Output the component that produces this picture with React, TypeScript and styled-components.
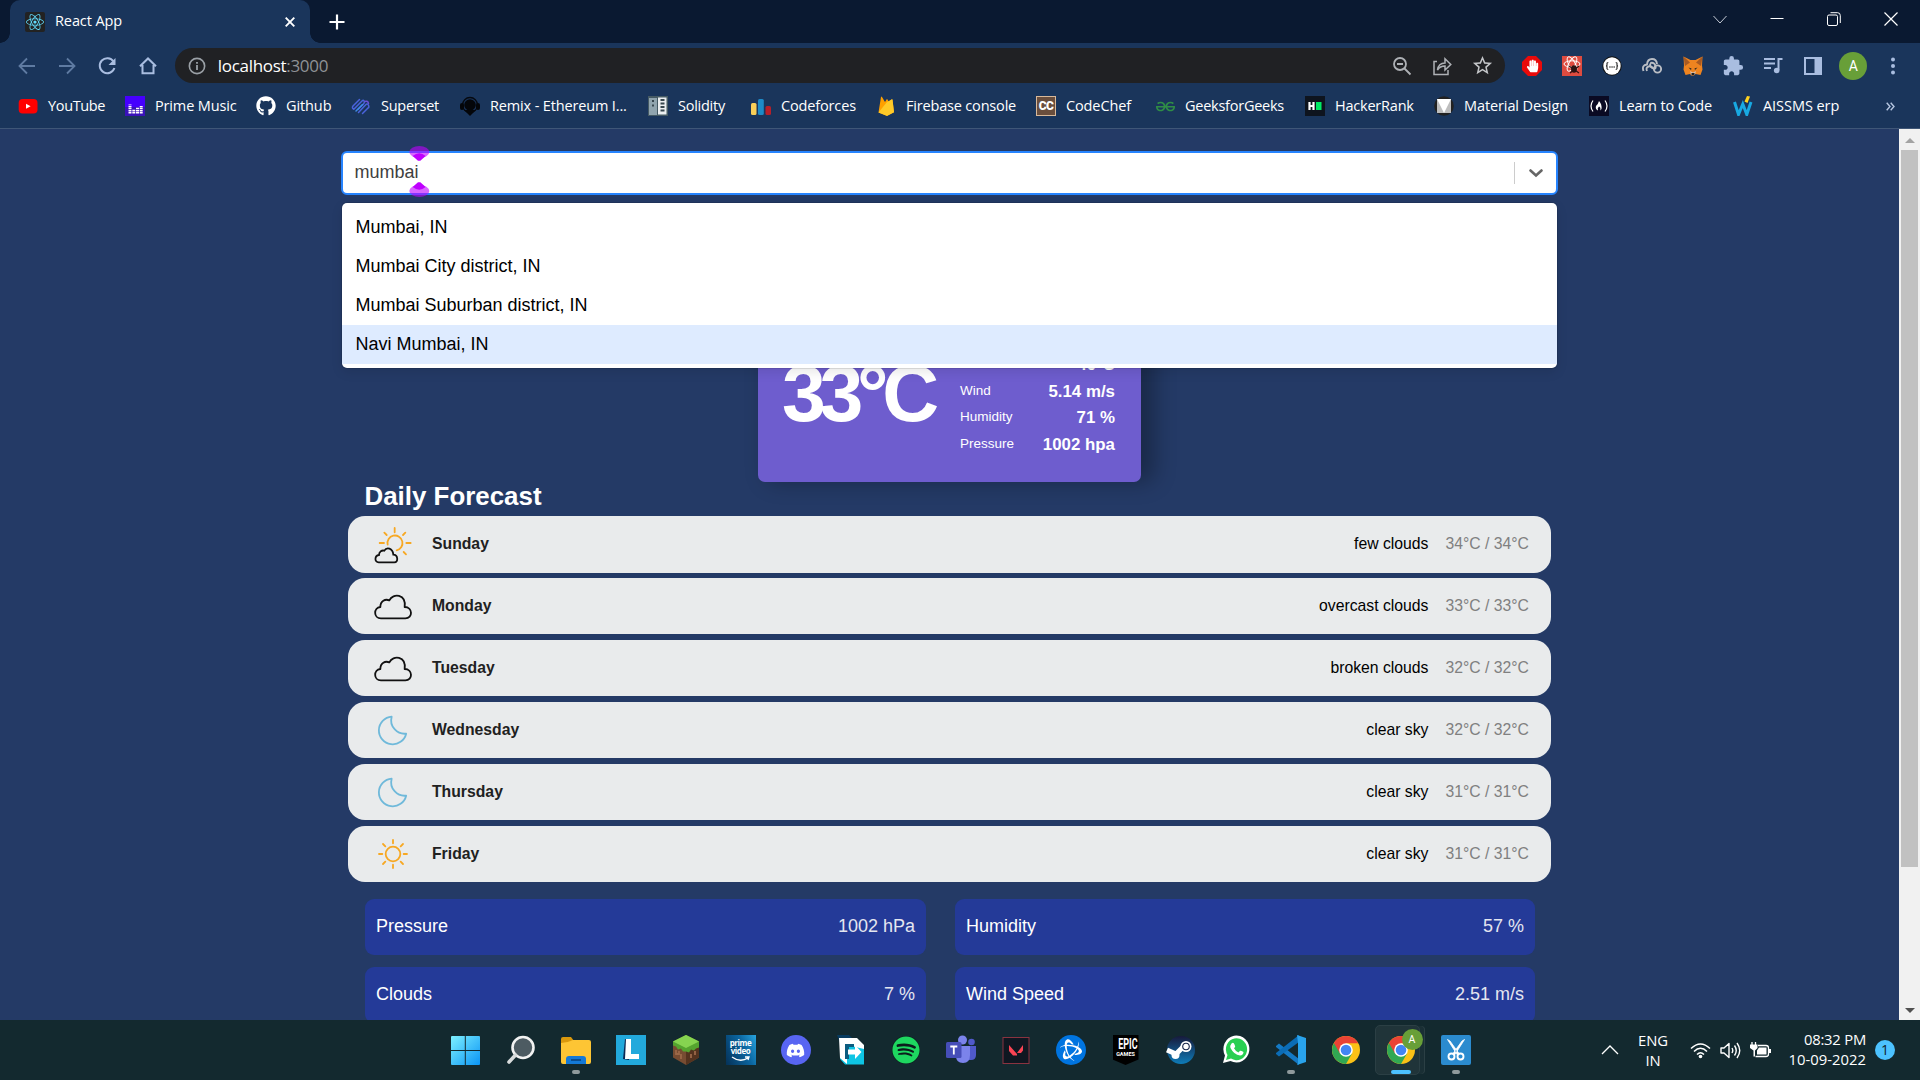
import React from "react";
import styled, { createGlobalStyle } from "styled-components";
import { FaGithub, FaDiscord, FaSpotify, FaReact, FaHandPaper } from "react-icons/fa";
import { SiBattledotnet, SiGeeksforgeeks } from "react-icons/si";
import { MdExtension, MdOutlineStarBorder } from "react-icons/md";

const ui = `"Open Sans", "Noto Sans", sans-serif`;
const arial = `"Liberation Sans", Arial, sans-serif`;

const GlobalStyle = createGlobalStyle`
  * { box-sizing: border-box; }
  body { margin: 0; overflow: hidden; background: #243a66; }
  svg { display: block; flex: none; }
`;

const Screen = styled.div`
  width: 1920px;
  height: 1080px;
  display: flex;
  flex-direction: column;
  overflow: hidden;
  font-family: ${ui};
`;

/* ---------- browser chrome ---------- */

const TabStrip = styled.header`
  height: 43px;
  flex: none;
  display: flex;
  background: #0a1931;
  padding-left: 10px;
  color: #fff;
`;

const Tab = styled.div`
  width: 300px;
  display: flex;
  align-items: center;
  padding: 0 15px;
  background: #1a355b;
  border-radius: 10px 10px 0 0;
  font-size: 14.5px;
  letter-spacing: -0.1px;
  position: relative;
  &::before, &::after {
    content: "";
    position: absolute;
    bottom: 0;
    width: 10px;
    height: 10px;
  }
  &::before { left: -10px; background: radial-gradient(circle at 0 0, transparent 9.5px, #1a355b 10px); }
  &::after { right: -10px; background: radial-gradient(circle at 100% 0, transparent 9.5px, #1a355b 10px); }
`;

const TabIcon = styled.span`
  width: 20px;
  height: 20px;
  margin-right: 10px;
  border-radius: 2px;
  background: #222;
  display: grid;
  place-items: center;
  color: #61dafb;
`;

const TabTitle = styled.span`
  flex: 1;
  padding-bottom: 2px;
`;

const NewTab = styled.div`
  width: 54px;
  display: grid;
  place-items: center;
`;

const WindowButtons = styled.div`
  margin-left: auto;
  display: flex;
  padding-right: 1px;
  height: 37px;
`;

const WindowButton = styled.div`
  width: 57px;
  display: grid;
  place-items: center;
`;

const Toolbar = styled.div`
  height: 46px;
  flex: none;
  display: flex;
  align-items: center;
  background: #1a355b;
  padding: 0 0 1px 7px;
`;

const ToolButton = styled.div<{ $dim?: boolean }>`
  width: 40.2px;
  height: 36px;
  display: grid;
  place-items: center;
  color: ${(p) => (p.$dim ? "#5f7ba2" : "#a9bde0")};
`;

const Omnibox = styled.div`
  width: 1330px;
  height: 35px;
  margin-left: 7px;
  margin-right: 7px;
  border-radius: 18px;
  background: #202124;
  display: flex;
  align-items: center;
  padding-left: 13px;
  padding-right: 2px;
  color: #9aa0a6;
`;

const Url = styled.div`
  flex: 1;
  margin-left: 12px;
  font-size: 17px;
  letter-spacing: -0.3px;
  padding-bottom: 1px;
  color: #8f9296;
  b { color: #fff; font-weight: 400; }
`;

const Avatar = styled.div<{ $size: number }>`
  width: ${(p) => p.$size}px;
  height: ${(p) => p.$size}px;
  border-radius: 50%;
  background: #689f38;
  color: #fff;
  font: ${(p) => p.$size / 2}px Roboto, sans-serif;
  display: grid;
  place-items: center;
`;

const Bookmarks = styled.nav`
  height: 40px;
  flex: none;
  display: flex;
  align-items: center;
  background: #1a355b;
  border-bottom: 1px solid #3f5677;
  padding: 0 0 5px 18px;
  color: #fff;
`;

const Bookmark = styled.div<{ $w: number; $track: number }>`
  width: ${(p) => p.$w}px;
  flex: none;
  display: flex;
  align-items: center;
  gap: 10px;
  white-space: nowrap;
  font-size: 14.5px;
  letter-spacing: ${(p) => p.$track}px;
  line-height: 20px;
`;

/* ---------- page ---------- */

const Viewport = styled.div`
  height: 891px;
  flex: none;
  display: flex;
  overflow: hidden;
  background: #243a66;
`;

const Page = styled.main`
  flex: 1;
  padding-top: 22px;
  font-family: ${arial};
`;

const Container = styled.div`
  width: 1217px;
  margin: 0 auto;
  position: relative;
  display: flex;
  flex-direction: column;
`;

const Control = styled.div`
  height: 44px;
  border: 2px solid #2684ff;
  border-radius: 6px;
  background: #fff;
  display: flex;
  align-items: center;
  padding-left: 11.5px;
  font-size: 18px;
  color: #404040;
`;

const Query = styled.span`
  flex: 1;
  padding-bottom: 2px;
`;

const Separator = styled.span`
  width: 1px;
  height: 22px;
  background: #ccc;
`;

const Dropdown = styled.span`
  width: 41px;
  display: grid;
  place-items: center;
`;

const Menu = styled.div`
  position: absolute;
  z-index: 2;
  top: 52px;
  left: 1px;
  right: 1px;
  padding: 5px 0 4px;
  border-radius: 5px;
  background: #fff;
  box-shadow: 0 0 0 1px rgba(0, 0, 0, 0.1), 0 4px 12px rgba(0, 0, 0, 0.1);
`;

const Option = styled.div<{ $active?: boolean }>`
  height: 39px;
  line-height: 38px;
  padding: 0 13.5px;
  font-size: 18px;
  color: #000;
  background: ${(p) => (p.$active ? "#deebff" : "transparent")};
`;

const Caret = styled.svg`
  position: absolute;
  z-index: 3;
  left: 66px;
  top: -6px;
`;

const WeatherCard = styled.section`
  width: 383px;
  height: 259px;
  margin: 28px auto 0;
  padding: 0 26px 22px;
  border-radius: 7px;
  background: #6e5dce;
  box-shadow: 11px -2px 22px 2px rgba(0, 0, 0, 0.3);
  color: #fff;
  display: flex;
  align-items: flex-end;
  justify-content: space-between;
`;

const Temperature = styled.div`
  margin-bottom: 27px;
  font-weight: 700;
  font-size: 78.75px;
  line-height: 78px;
  letter-spacing: -6.3px;
  margin-left: -2px;
`;

const Details = styled.div`
  width: 155px;
`;

const DetailRow = styled.div`
  height: 26.8px;
  display: flex;
  justify-content: space-between;
`;

const DetailLabel = styled.span`
  font-size: 13.5px;
  line-height: 21px;
`;

const DetailValue = styled.span`
  font-size: 16.875px;
  font-weight: 700;
  line-height: 24px;
`;

const Heading = styled.h2`
  margin: 0 0 0 23.5px;
  height: 34px;
  line-height: 29px;
  font-size: 25.9px;
  color: #fff;
`;

const DayList = styled.div`
  display: flex;
  flex-direction: column;
  gap: 6px;
  padding: 0 7px;
`;

const DayRow = styled.div<{ $first: boolean }>`
  height: ${(p) => (p.$first ? 57 : 56)}px;
  margin-bottom: ${(p) => (p.$first ? -1 : 0)}px;
  display: flex;
  align-items: center;
  padding: 0 22px 1px;
  border-radius: 17px;
  background: #e9ebec;
  font-size: 15.75px;
`;

const DayIcon = styled.span`
  margin-right: 14px;
`;

const DayName = styled.span`
  flex: 1;
  font-weight: 700;
  color: #212121;
`;

const DayText = styled.span`
  margin-right: 17px;
  color: #000;
`;

const DayTemps = styled.span`
  color: #808080;
`;

const Facts = styled.div`
  display: grid;
  grid-template-columns: 561px 580px;
  column-gap: 29px;
  row-gap: 11.5px;
  padding: 17px 0 0 24px;
`;

const Fact = styled.div`
  height: 56px;
  display: flex;
  justify-content: space-between;
  padding: 17px 11px 0;
  border-radius: 9px;
  background: #243a98;
  color: #fff;
  font-size: 18px;
  line-height: 20px;
  span { color: #e4e6f0; }
`;

const ScrollTrack = styled.div`
  width: 21px;
  background: #f1f1f1;
  display: flex;
  flex-direction: column;
  align-items: center;
`;

const ScrollArrow = styled.div`
  height: 21px;
  display: grid;
  place-items: center;
`;

const ScrollThumb = styled.div`
  width: 17px;
  height: 717px;
  margin-bottom: auto;
  background: #c1c1c1;
`;

/* ---------- taskbar ---------- */

const Taskbar = styled.footer`
  height: 60px;
  flex: none;
  display: flex;
  background: #13292f;
  padding-left: 438px;
  color: #fff;
`;

const TaskItem = styled.div`
  width: 55px;
  height: 60px;
  padding-top: 15px;
  display: flex;
  flex-direction: column;
  align-items: center;
  position: relative;
`;

const ActivePlate = styled.div`
  position: absolute;
  left: 2px;
  top: 5px;
  width: 45px;
  height: 50px;
  border-radius: 5px;
  background: #203439;
  border: 1px solid #2b3f44;
  box-shadow: 5px 0 0 -1px #1a2f35, 6px 0 0 -1px #2b3f44;
`;

const TaskIcon = styled.div`
  position: relative;
  width: 30px;
  height: 30px;
`;

const Badge = styled.div`
  position: absolute;
  left: 16px;
  top: -6px;
`;

const Indicator = styled.div<{ $active?: boolean }>`
  position: relative;
  margin-top: 5px;
  width: ${(p) => (p.$active ? 20 : 8)}px;
  height: 4px;
  border-radius: 2px;
  background: ${(p) => (p.$active ? "#4cc2ff" : "#8f9a9c")};
`;

const Round = styled.div<{ $bg: string; $fg: string; $size?: number }>`
  width: ${(p) => p.$size || 28}px;
  height: ${(p) => p.$size || 28}px;
  margin: ${(p) => (30 - (p.$size || 28)) / 2}px;
  border-radius: 50%;
  background: ${(p) => p.$bg};
  color: ${(p) => p.$fg};
  display: grid;
  place-items: center;
`;

const Tray = styled.div`
  margin-left: auto;
  display: flex;
  align-items: center;
  padding-right: 25px;
  font-size: 14.8px;
  line-height: 20px;
`;

const Language = styled.div`
  width: 40px;
  margin: 0 17px 0 14px;
  text-align: center;
  letter-spacing: -0.1px;
  padding-bottom: 1px;
`;

const Status = styled.div`
  display: flex;
  gap: 9px;
`;

const Clock = styled.div`
  width: 95px;
  text-align: right;
  padding-bottom: 3px;
  white-space: nowrap;
`;

const ClockTime = styled.div`
  letter-spacing: -0.22px;
`;

const ClockDate = styled.div`
  letter-spacing: 0.02px;
`;

const Notice = styled.div`
  width: 20px;
  height: 20px;
  margin-left: 9px;
  border-radius: 50%;
  background: #4cc2ff;
  color: #10242c;
  font-size: 14px;
  text-align: center;
`;

/* ---------- drawings ---------- */

type IconProps = { children: React.ReactNode; size?: number; box?: string };
const Svg = ({ children, size = 20, box = "0 0 20 20" }: IconProps) => (
  <svg width={size} height={size} viewBox={box} fill="none">{children}</svg>
);

const YouTube = () => (<Svg><rect x=".7" y="3" width="18.800" height="14.500" rx="4" fill="#f00" /><path d="M8 7.700v5.100l4.600-2.600z" fill="#fff" /></Svg>);
const PrimeMusic = () => (
  <Svg>
    <rect width="20" height="20" fill="#4600ff" /><rect y="11" width="20" height="9" fill="#3a12ba" />
    <path d="M5 17.500v-9M8.800 17.500V13M12.500 17.500V11.500M16.200 17.500V10" stroke="#fff" strokeWidth="3" strokeDasharray="1.5 .6" />
  </Svg>
);
const Superset = () => (
  <Svg>
    <g stroke="#4a63dc" strokeWidth="1.500" strokeLinecap="round" strokeLinejoin="round">
      <path d="M8.500 3.500L2 10q-1.500 2 .8 3.300L11 5q1.500-1.500 2.200.2T12 8.500l-5 5" />
      <path d="M5 15l6.500-6.500" stroke="#3f8be8" />
      <path d="M7.500 16.500l7-7.500q2-2 3 .2T17 12l-5.500 5.500" />
      <path d="M14 5.500q3-1 3.500 2" stroke="#6c4fd6" />
    </g>
  </Svg>
);
const Remix = () => (
  <Svg><circle cx="10" cy="9" r="7.500" stroke="#06090f" strokeWidth="1.300" /><circle cx="10" cy="9" r="5.800" fill="#04060a" /><path d="M4 14h12l-6 6z" fill="#04060a" /><rect x="0" y="7" width="4" height="7" rx="2" fill="#04060a" /><rect x="16" y="7" width="4" height="7" rx="2" fill="#04060a" /></Svg>
);
const Solidity = () => (
  <Svg><rect width="20" height="20" fill="#455a64" /><rect x="1" y="2" width="8" height="17" fill="#90a4ae" /><rect x="10" y="1.500" width="8.500" height="17" fill="#eceff1" /><path d="M5 4v2M5 8.500v2M12.500 4h4M12.500 7.500h4M12.500 11h4M12.500 14.500h4" stroke="#37474f" strokeWidth="2" /></Svg>
);
const Codeforces = () => (
  <Svg><rect x="0" y="7" width="5.500" height="12" rx="1.500" fill="#f9cf58" /><rect x="7" y="3" width="5.800" height="16" rx="1.500" fill="#1d8ac7" /><rect x="14.500" y="10" width="5.500" height="9" rx="1.500" fill="#b71f29" /></Svg>
);
const Firebase = () => (
  <Svg><path d="M2.500 16.500L5 1q.4-1 1 0l3 5 1.500-2.500q.5-.8 1 0L13 6l2.500-2.500q.8-.6 1 .3l1.500 12.500-7 3.500z" fill="#ffa000" /><path d="M2.500 16.500L11 6l4.500-2.500q.8-.6 1 .3l1.500 12.500-7 3.700z" fill="#ffca28" /></Svg>
);
const Chip = styled.span<{ $bg: string; $line?: string }>`
  width: 20px;
  height: 20px;
  flex: none;
  display: grid;
  place-items: center;
  background: ${(p) => p.$bg};
  color: #fff;
  box-shadow: inset 0 0 0 1px ${(p) => p.$line || p.$bg};
  font: 900 12px/1 Roboto, sans-serif;
  letter-spacing: -0.5px;
`;
const HackerRank = () => (
  <Svg><rect width="20" height="20" fill="#0e141e" /><path d="M4.500 6v8M8.500 6v8M4.500 10h4" stroke="#fff" strokeWidth="2.200" /><rect x="11" y="6" width="5.500" height="8" fill="#00ea64" /></Svg>
);
const Material = () => (
  <Svg><circle cx="10" cy="10" r="9.800" fill="#212121" /><path d="M3 3h14v14H3z" fill="#bdbdbd" /><path d="M3 3h14l-7 14z" fill="#fff" /></Svg>
);
const FreeCode = () => (
  <Svg><rect width="20" height="20" fill="#0a0a23" /><path d="M4 4.500q-4 5.500 0 11M16 4.500q4 5.500 0 11" stroke="#fff" strokeWidth="1.200" /><path d="M10 5q3 3 2.500 8l-1.300 1.500Q12 11 10 10.500 8 12 9 14.500q-3-1.500-2-4.500 2-1.500 3-5z" fill="#fff" /></Svg>
);
const Aissms = () => (
  <Svg><path d="M1.500 6l4 12.500L9.800 8l4 10.500L18 6" stroke="#18a9e2" strokeWidth="3" /><path d="M11.500 5.500L14 0l3 .5L14.500 7z" fill="#ffd21f" /></Svg>
);

const SunCloud = () => (
  <svg width="48" height="56" viewBox="120 138 144 168" fill="none" strokeLinecap="round" strokeWidth="5.400">
    <path d="M173 224A22.500 22.500 0 1 1 200 241" stroke="#f7a823" />
    <path d="M194 174v13M163 188l7 7M226 188l-7 7M149 219h13M229 219h13M221 246l7 7" stroke="#f7a823" />
    <path d="M146 277C133 277 133 257 147 255 147 244 156 240 163 242 170 230 188 234 190 254 204 254 206 277 193 277Z" stroke="#111" />
  </svg>
);
const Cloud = () => (
  <svg width="48" height="56" viewBox="120 0 144 168" fill="none" strokeLinejoin="round" strokeWidth="5.400">
    <path d="M153 121C130 121 130 89 151 87 151 68 166 62 178 67 189 44 229 48 224 87 249 87 249 121 226 121Z" stroke="#111" />
  </svg>
);
const Moon = () => (
  <svg width="48" height="56" viewBox="120 0 144 168" fill="none" strokeLinejoin="round" strokeWidth="5.400">
    <path d="M185 44A41.500 41.500 0 1 0 228.500 95C202 98 177 73 185 44Z" stroke="#6fb9da" />
  </svg>
);
const Sun = () => (
  <svg width="48" height="56" viewBox="120 0 144 168" fill="none" strokeLinecap="round" strokeWidth="5.400" stroke="#f7a823">
    <circle cx="189" cy="84" r="22" />
    <path d="M189 42v10M189 116v10M147 84h10M221 84h10M159 54l7 7M212 107l7 7M219 54l-7 7M166 107l-7 7" />
  </svg>
);

const T = ({ children }: { children: React.ReactNode }) => <Svg size={30} box="0 0 30 30">{children}</Svg>;
const WindowsLogo = () => (
  <T><defs><linearGradient id="win" x1="0" y1="0" x2="1" y2="1"><stop stopColor="#7df0ff" /><stop offset="1" stopColor="#0a94f5" /></linearGradient></defs><path d="M0 2q0-1 1-1h12.800v14H0zM14.800 1H28q1 0 1 1v13H14.800zM0 16h13.800v14H1q-1 0-1-1zM14.800 16H29v13q0 1-1 1H14.800z" fill="url(#win)" /></T>
);
const SearchLogo = () => (<T><circle cx="17" cy="12.500" r="10.500" fill="#4d5b62" stroke="#f2f2f2" strokeWidth="2.600" /><path d="M9.500 20L3 27" stroke="#d8dbdc" strokeWidth="3.600" strokeLinecap="round" /></T>);
const Explorer = () => (
  <T><path d="M0 4q0-2 2-2h8l3 4h-4v4H0z" fill="#d9980d" /><path d="M0 8q6 0 12-3h16q2 0 2 2v20q0 2-2 2H2q-2 0-2-2z" fill="#fdc534" /><path d="M5 29v-5q0-3 3-3h14q3 0 3 3v5z" fill="#1479d6" /><path d="M10 25h10" stroke="#063f7a" strokeWidth="1.500" /></T>
);
const LApp = () => (<T><path d="M0 0h30v30H0z" fill="#22a9dc" /><path d="M9 4l-2 20 6 1V5z" fill="#0d2853" /><path d="M10 4h5v15h8v5H9z" fill="#fff" /></T>);
const Minecraft = () => (
  <T><path d="M15 0l13 6.500v16L15 30 2 22.500v-16z" fill="#774c32" /><path d="M15 13l13-6.500v16L15 30z" fill="#54331f" /><path d="M15 0l13 6.500v6l-3 1-2 2-3-1-2 3-3-1-3 0-2-3-3 1-2-3-3-1v-4z" fill="#55a42f" /><path d="M15 0l13 6.500L15 13 2 6.500z" fill="#86d450" /><path d="M5 15v4h3v-3M10 19v5M20 19v4M24 16v4" stroke="#9b6848" strokeWidth="1.800" /></T>
);
const PrimeBox = styled.div`
  width: 30px;
  height: 30px;
  padding-top: 4px;
  background: linear-gradient(65deg, #053157, #0b66a1 60%, #27a4df);
  color: #fff;
  font: 700 8px/8px "Open Sans", sans-serif;
  text-align: center;
  letter-spacing: -0.4px;
  svg { margin: 1px auto 0; }
`;
const Prime = () => (<PrimeBox>prime<br />video<svg width="20" height="7" viewBox="0 0 20 7" fill="none"><path d="M1 1q8 6 16 1M14 1l4 0-1 3" stroke="#fff" strokeWidth="1.300" /></svg></PrimeBox>);
const ArrowApp = () => (
  <T><path d="M1 0h12l4 4v18H9z" fill="#083b60" /><path d="M9 29.500L4 24V3h16l8 8v18.500z" fill="#0ec5e4" /><path d="M3 3h18l7 7v4l-17-4v19L4 23z" fill="#fff" /><path d="M9 9h9v3h-5v12H9z" fill="#0b5c80" /><path d="M12 14.500h7v-4.500l6.500 7-6.500 7v-4.500h-7z" fill="#fff" /></T>
);
const Teams = () => (
  <T><circle cx="16.500" cy="5" r="4.500" fill="#7b83eb" /><circle cx="25.500" cy="7" r="3.300" fill="#5059c9" /><path d="M21 11h9v9q0 5-5 5h-4z" fill="#5059c9" /><path d="M10 11h14v9q0 8-7 8t-7-7z" fill="#7b83eb" /><rect x="0" y="7" width="15.500" height="16" rx="1.500" fill="#464eb8" /><path d="M4.300 11.500h7M7.800 11.500v8" stroke="#fff" strokeWidth="1.800" /></T>
);
const Valorant = () => (<T><rect x="2" y="2.500" width="26" height="26" fill="#0f1721" stroke="#8a3340" /><path d="M8 10l8 9v1.500h-4L8 16zM22 10v5.500l-2 2.500h-4z" fill="#fa4454" /></T>);
const EpicBox = styled.div`
  width: 26px;
  height: 30px;
  margin: 0 2px;
  padding-top: 3px;
  background: #000;
  clip-path: polygon(0 0, 100% 0, 100% 82%, 50% 100%, 0 82%);
  color: #fff;
  text-align: center;
  font: 700 15px/13px Roboto, sans-serif;
  span { display: block; transform: scaleX(0.6); letter-spacing: 0; }
  small { display: block; font: 700 5.500px/7px Roboto, sans-serif; }
`;
const Epic = () => (<EpicBox><span>EPIC</span><small>GAMES</small></EpicBox>);
const Steam = () => (
  <T><defs><linearGradient id="stm" x1="0" y1="0" x2="0" y2="1"><stop stopColor="#171a3c" /><stop offset="1" stopColor="#0e7cb8" /></linearGradient></defs><circle cx="15" cy="15" r="14" fill="url(#stm)" /><path d="M1 15l9 4 7-7" stroke="#fff" strokeWidth="5" /><circle cx="9.500" cy="20" r="4" fill="#fff" /><circle cx="20" cy="11.500" r="5.500" fill="#fff" /><circle cx="20" cy="11.500" r="3.800" fill="#152348" /><circle cx="20" cy="11.500" r="2.700" fill="#fff" /></T>
);
const WhatsApp = () => (<T><path d="M2 28l2-7.500A13 13.500 0 1 1 9.500 26z" fill="#fff" /><path d="M5 25l1.500-5A10.600 11 0 1 1 10 23.600z" fill="#29cf51" /><path d="M10.500 8.500q2-2 3 1l.7 2q0 .8-1.200 1.800 1.500 3 4.500 4.200l1.500-1.700q.7-.5 3.500 1.300-.2 3.400-3.500 3.400-6-.6-9.500-7.500-.6-2.700 1-4.500z" fill="#fff" /></T>);
const VsCode = () => (<T><path d="M0 11l3-2.500L23 24v6L0 12z" fill="#1479c4" /><path d="M0 19l3 2.500L23 7V0L0 18z" fill="#0b6cb5" /><path d="M21 0l9 3v24l-9 3 1-2V8z" fill="#29a3ec" /></T>);
const Chrome = () => (
  <T><circle cx="15" cy="15" r="14" fill="#fbc116" /><path d="M15 15L2.900 8A14 14 0 0 0 15 29l6-10.500z" fill="#31a853" /><path d="M2.900 8A14 14 0 0 1 27.200 8.200H15l-6 10.300z" fill="#ea4335" /><circle cx="15" cy="15" r="6.800" fill="#fff" /><circle cx="15" cy="15" r="5.300" fill="#4285f4" /></T>
);
const Snip = () => (
  <T><rect width="30" height="30" rx="2" fill="#2b8bcf" /><path d="M6.500 4.500L9 6l9 12.500-2 1zM23.500 4.500L21 6l-9 12.500 2 1z" fill="#fff" stroke="#fff" strokeWidth=".8" /><circle cx="10.500" cy="21.500" r="3" stroke="#fff" strokeWidth="1.900" /><circle cx="19.500" cy="21.500" r="3" stroke="#fff" strokeWidth="1.900" /></T>
);

/* ---------- data ---------- */

const bookmarks: [string, number, number, React.ReactNode][] = [
  ["YouTube", 107, -0.35, <YouTube />],
  ["Prime Music", 131, -0.15, <PrimeMusic />],
  ["Github", 95, -0.1, <FaGithub size={20} />],
  ["Superset", 109, -0.25, <Superset />],
  ["Remix - Ethereum I...", 188, -0.15, <Remix />],
  ["Solidity", 103, -0.25, <Solidity />],
  ["Codeforces", 125, -0.15, <Codeforces />],
  ["Firebase console", 160, -0.18, <Firebase />],
  ["CodeChef", 120, -0.12, <Chip $bg="#6a4e3d" $line="#d9b99a">CC</Chip>],
  ["GeeksforGeeks", 149, -0.25, <SiGeeksforgeeks size={19} color="#2f8d46" />],
  ["HackerRank", 129, -0.22, <HackerRank />],
  ["Material Design", 155, -0.1, <Material />],
  ["Learn to Code", 144, -0.15, <FreeCode />],
  ["AISSMS erp", 153, -0.05, <Aissms />],
];

const days: [string, React.ReactNode, string, string][] = [
  ["Sunday", <SunCloud />, "few clouds", "34°C / 34°C"],
  ["Monday", <Cloud />, "overcast clouds", "33°C / 33°C"],
  ["Tuesday", <Cloud />, "broken clouds", "32°C / 32°C"],
  ["Wednesday", <Moon />, "clear sky", "32°C / 32°C"],
  ["Thursday", <Moon />, "clear sky", "31°C / 31°C"],
  ["Friday", <Sun />, "clear sky", "31°C / 31°C"],
];

const details: [string, string][] = [
  ["", "40°C"],
  ["Wind", "5.14 m/s"],
  ["Humidity", "71 %"],
  ["Pressure", "1002 hpa"],
];

const facts: [string, string][] = [
  ["Pressure", "1002 hPa"],
  ["Humidity", "57 %"],
  ["Clouds", "7 %"],
  ["Wind Speed", "2.51 m/s"],
];

const tasks: { icon: React.ReactNode; open?: boolean; active?: boolean }[] = [
  { icon: <WindowsLogo /> },
  { icon: <SearchLogo /> },
  { icon: <Explorer />, open: true },
  { icon: <LApp /> },
  { icon: <Minecraft /> },
  { icon: <Prime /> },
  { icon: <Round $bg="#5865f2" $fg="#fff" $size={30}><FaDiscord size={19} /></Round> },
  { icon: <ArrowApp /> },
  { icon: <Round $bg="#0c1c1c" $fg="#1ed760"><FaSpotify size={28} /></Round> },
  { icon: <Teams /> },
  { icon: <Valorant /> },
  { icon: <Round $bg="#0074e0" $fg="#fff" $size={30}><SiBattledotnet size={22} /></Round> },
  { icon: <Epic /> },
  { icon: <Steam /> },
  { icon: <WhatsApp /> },
  { icon: <VsCode />, open: true },
  { icon: <Chrome /> },
  { icon: <Chrome />, active: true },
  { icon: <Snip />, open: true },
];

export default function App() {
  return (
    <Screen>
      <GlobalStyle />
      <TabStrip>
        <Tab>
          <TabIcon><FaReact size={18} /></TabIcon>
          <TabTitle>React App</TabTitle>
          <Svg size={10} box="0 0 10 10"><path d="M.7.7l8.600 8.600M9.300.7L.7 9.300" stroke="#fff" strokeWidth="1.900" /></Svg>
        </Tab>
        <NewTab><Svg size={16} box="0 0 16 16"><path d="M8 .5v15M.5 8h15" stroke="#fff" strokeWidth="2.200" /></Svg></NewTab>
        <WindowButtons>
          <WindowButton><Svg size={14} box="0 0 14 14"><path d="M.5 4L7 11l6.500-7" stroke="#c5cbd5" /></Svg></WindowButton>
          <WindowButton><Svg size={14} box="0 0 14 14"><path d="M.5 6.500h13" stroke="#fff" /></Svg></WindowButton>
          <WindowButton><Svg size={14} box="0 0 14 14"><rect x=".5" y="3" width="10" height="10.500" rx="1.500" stroke="#fff" /><path d="M3.500.7h7q2.800 0 2.800 2.800v7.500" stroke="#fff" /></Svg></WindowButton>
          <WindowButton><Svg size={14} box="0 0 14 14"><path d="M.5.5l13 13M13.500.5l-13 13" stroke="#fff" strokeWidth="1.200" /></Svg></WindowButton>
        </WindowButtons>
      </TabStrip>

      <Toolbar>
        <ToolButton $dim><Svg><path d="M18 10H3M10 2.500L2.500 10l7.500 7.500" stroke="currentColor" strokeWidth="1.800" /></Svg></ToolButton>
        <ToolButton $dim><Svg><path d="M2 10h15M10 2.500l7.500 7.500-7.500 7.500" stroke="currentColor" strokeWidth="1.800" /></Svg></ToolButton>
        <ToolButton><Svg><path d="M16.500 5.500A7.500 7.500 0 1 0 17.400 12" stroke="currentColor" strokeWidth="2" /><path d="M18.500 2v7h-7z" fill="currentColor" /></Svg></ToolButton>
        <ToolButton><Svg><path d="M4.500 9v8.200h11V9M2 10.300L10 2.500l8 7.800" stroke="currentColor" strokeWidth="2" /></Svg></ToolButton>
        <Omnibox>
          <Svg size={18}><circle cx="10" cy="10" r="8.500" stroke="currentColor" strokeWidth="1.800" /><path d="M10 9v5.500M10 5.500v2" stroke="currentColor" strokeWidth="2" /></Svg>
          <Url><b>localhost</b>:3000</Url>
          <ToolButton><Svg><g stroke="#aeb1b5" strokeWidth="1.800"><circle cx="8" cy="8" r="6" /><path d="M12.500 12.500l6 6M5 8h6" /></g></Svg></ToolButton>
          <ToolButton><Svg><path d="M5 5.500H2v13h14V14M5.500 14q1-7 7.500-7V2.800L18.800 8.500 13 14v-4q-5 0-7.500 4z" stroke="#aeb1b5" strokeWidth="1.500" /></Svg></ToolButton>
          <ToolButton><MdOutlineStarBorder size={23} color="#c3c5c8" /></ToolButton>
        </Omnibox>
        <ToolButton><Svg><path d="M6 0h8l6 6v8l-6 6H6l-6-6V6z" fill="#ea0a0a" /><g transform="translate(4 3.500)"><FaHandPaper size={13} color="#fff" /></g></Svg></ToolButton>
        <ToolButton><Chip $bg="#de4b3f"><Svg><g stroke="#fff" strokeWidth="1"><ellipse cx="10" cy="8" rx="8" ry="3.200" /><ellipse cx="10" cy="8" rx="8" ry="3.200" transform="rotate(60 10 8)" /><ellipse cx="10" cy="8" rx="8" ry="3.200" transform="rotate(120 10 8)" /></g><ellipse cx="12" cy="13" rx="3" ry="3.800" fill="#2b1313" /><path d="M7 10l10 7M8 17l9-7" stroke="#2b1313" strokeWidth="1.200" /></Svg></Chip></ToolButton>
        <ToolButton><Svg><circle cx="10" cy="10" r="9.700" fill="#111" /><circle cx="10" cy="10" r="8.700" fill="#fff" /><path d="M6.300 6.500q-1.500 0-1.300 1.800t-1 1.700q1.200 0 1 1.700t1.300 1.800M13.700 6.500q1.500 0 1.300 1.800t1 1.700q-1.200 0-1 1.700t-1.300 1.800" stroke="#333" strokeWidth="1.200" /><path d="M7.300 11h5.500" stroke="#444" strokeWidth="1.300" strokeDasharray="1.300 .8" /></Svg></ToolButton>
        <ToolButton><Svg><g stroke="#b9bdc4" strokeWidth="1.900"><path d="M1.500 15Q-.5 9 5 8.500 5.500 3 10 3t5 5" /><path d="M5 15q-1.500-3.500 1.500-4.500T11 13" /><circle cx="15.500" cy="13" r="3.600" /><path d="M9 7q-2.500 3 1.500 5t3-2-5-3" /></g></Svg></ToolButton>
        <ToolButton><Svg><path d="M.5.5L7.500 4h5l7-3.500-.5 9 .5 4-2 5.500-5-1-1.500 1.500h-3L7 18l-4.500 1-2-5.500.5-4z" fill="#ee8420" /><path d="M.5.500L7 6.500 2 10zM19.500.5L13 6.500l5 3.500z" fill="#a85a22" /><path d="M7 15l1.200 4h3.600l1.200-4-3 1.500z" fill="#d7c1b3" /><path d="M5.500 11.500l3 1-.5 1.500zM14.500 11.500l-3 1 .5 1.500zM8.500 17h3v2h-3z" fill="#222" /></Svg></ToolButton>
        <ToolButton><MdExtension size={22} /></ToolButton>
        <ToolButton><Svg><path d="M1 3h11M1 7.500h11M1 12h7" stroke="currentColor" strokeWidth="1.800" /><path d="M15.500 14V3h4" stroke="currentColor" strokeWidth="2" /><circle cx="13.700" cy="14.500" r="2.800" fill="currentColor" /></Svg></ToolButton>
        <ToolButton><Svg><rect x="2" y="2" width="16" height="16" stroke="currentColor" strokeWidth="2" /><path d="M11.500 2h7v16h-7z" fill="currentColor" /></Svg></ToolButton>
        <ToolButton><Avatar $size={28}>A</Avatar></ToolButton>
        <ToolButton><Svg><g fill="currentColor"><circle cx="9" cy="3.500" r="2" /><circle cx="9" cy="10" r="2" /><circle cx="9" cy="16.500" r="2" /></g></Svg></ToolButton>
      </Toolbar>

      <Bookmarks>
        {bookmarks.map(([name, w, track, icon]) => (
          <Bookmark key={name} $w={w} $track={track}>{icon}{name}</Bookmark>
        ))}
        <Svg size={9} box="0 0 9 9"><path d="M.7.7L4 4.500.7 8.300M4.700.7L8 4.500 4.700 8.300" stroke="#b5c5e0" strokeWidth="1.400" /></Svg>
      </Bookmarks>

      <Viewport>
        <Page>
          <Container>
            <Control>
              <Query>mumbai</Query>
              <Separator />
              <Dropdown><Svg size={14} box="0 0 14 14"><path d="M1.500 4.500L7 9.500l5.500-5" stroke="#666" strokeWidth="2.600" strokeLinecap="round" /></Svg></Dropdown>
            </Control>
            <Caret width="24.660" height="53.330" viewBox="230 30 74 160">
              <ellipse cx="267" cy="51" rx="30" ry="18" fill="#c000ff" fillOpacity="0.6" />
              <ellipse cx="267" cy="168" rx="30" ry="18" fill="#c000ff" fillOpacity="0.6" />
              <path d="M247 63q20-16 39 0l-16 14h-7zM247 156q20 16 39 0l-16-14h-7z" fill="#bf00ff" />
            </Caret>
            <Menu>
              <Option>Mumbai, IN</Option>
              <Option>Mumbai City district, IN</Option>
              <Option>Mumbai Suburban district, IN</Option>
              <Option $active>Navi Mumbai, IN</Option>
            </Menu>

            <WeatherCard>
              <Temperature>33°C</Temperature>
              <Details>
                {details.map(([label, value]) => (
                  <DetailRow key={value}>
                    <DetailLabel>{label}</DetailLabel>
                    <DetailValue>{value}</DetailValue>
                  </DetailRow>
                ))}
              </Details>
            </WeatherCard>

            <Heading>Daily Forecast</Heading>
            <DayList>
              {days.map(([name, icon, text, temps], i) => (
                <DayRow key={name} $first={i === 0}>
                  <DayIcon>{icon}</DayIcon>
                  <DayName>{name}</DayName>
                  <DayText>{text}</DayText>
                  <DayTemps>{temps}</DayTemps>
                </DayRow>
              ))}
            </DayList>
            <Facts>
              {facts.map(([label, value]) => (
                <Fact key={label}>{label}<span>{value}</span></Fact>
              ))}
            </Facts>
          </Container>
        </Page>
        <ScrollTrack>
          <ScrollArrow><Svg size={10} box="0 0 10 10"><path d="M0 8l5-5 5 5z" fill="#a3a3a3" /></Svg></ScrollArrow>
          <ScrollThumb />
          <ScrollArrow><Svg size={10} box="0 0 10 10"><path d="M0 3l5 5 5-5z" fill="#505050" /></Svg></ScrollArrow>
        </ScrollTrack>
      </Viewport>

      <Taskbar>
        {tasks.map((task, i) => (
          <TaskItem key={i}>
            {task.active && <ActivePlate />}
            <TaskIcon>
              {task.icon}
              {task.active && <Badge><Avatar $size={21}>A</Avatar></Badge>}
            </TaskIcon>
            {(task.open || task.active) && <Indicator $active={task.active} />}
          </TaskItem>
        ))}
        <Tray>
          <Svg size={18} box="0 0 18 18"><path d="M1 13l8-8 8 8" stroke="#fff" strokeWidth="1.300" /></Svg>
          <Language>ENG<br />IN</Language>
          <Status>
            <Svg size={21} box="0 0 21 21"><g stroke="#fff" strokeWidth="1.500"><path d="M1 8.500q9.500-9 19 0" /><path d="M4 11.500q6.500-6.500 13 0" /><path d="M7 14.500q3.500-3.500 7 0" /></g><circle cx="10.500" cy="16.500" r="1.800" fill="#fff" /></Svg>
            <Svg size={21} box="0 0 21 21"><g stroke="#fff" strokeWidth="1.400"><path d="M1 8h3l5-4.500v14L4 13H1z" strokeLinejoin="round" /><path d="M12 8q1.500 2.500 0 5M14.500 5.500q3.500 5 0 10M17 3q5.500 7.500 0 15" /></g></Svg>
            <Svg size={21} box="0 0 21 21"><path d="M8 5.500h8q2.500 0 2.500 2.500v6q0 2.500-2.500 2.500H5.500" stroke="#fff" strokeWidth="1.300" /><path d="M9 7.500h7.500v7H7v-4zM19 9h2v4h-2zM0 4.500h7.500v3.500L5 10.500v6H3.500v-6L0 8z" fill="#fff" /><path d="M2 2v3M5.500 2v3" stroke="#fff" strokeWidth="1.300" /></Svg>
          </Status>
          <Clock>
            <ClockTime>08:32 PM</ClockTime>
            <ClockDate>10-09-2022</ClockDate>
          </Clock>
          <Notice>1</Notice>
        </Tray>
      </Taskbar>
    </Screen>
  );
}
